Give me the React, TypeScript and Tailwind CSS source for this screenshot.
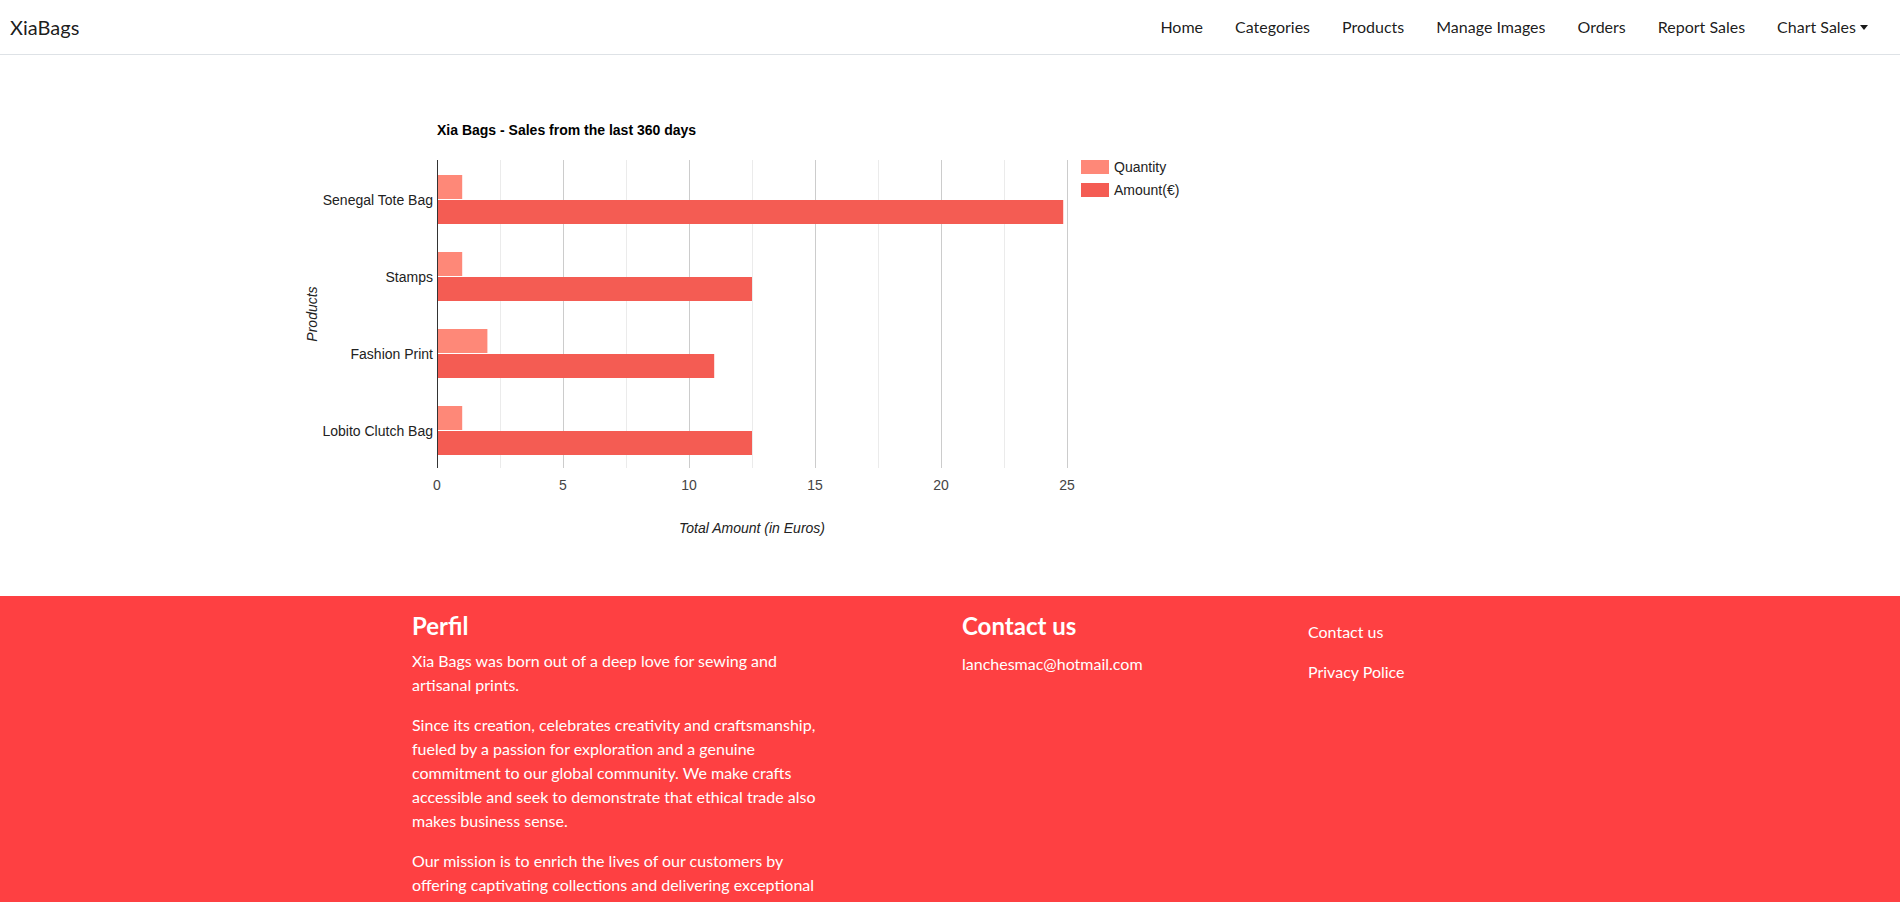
import React from 'react';

const navLinks = ['Home', 'Categories', 'Products', 'Manage Images', 'Orders', 'Report Sales'];

const sales = [
  { name: 'Senegal Tote Bag', quantity: 1, amount: 24.85 },
  { name: 'Stamps', quantity: 1, amount: 12.5 },
  { name: 'Fashion Print', quantity: 2, amount: 11 },
  { name: 'Lobito Clutch Bag', quantity: 1, amount: 12.5 },
];

const UNIT = 25.2;
const LEFT = 147;
const TOP = 85;
const BOTTOM = 393;
const QTY_COLOR = '#fe8878';
const AMT_COLOR = '#f45c53';

function SalesChart() {
  const grid = Array.from({ length: 10 }, (_, i) => i + 1);
  const ticks = [0, 5, 10, 15, 20, 25];

  return (
    <svg width="900" height="500" className="block" style={{ fontFamily: '"Liberation Sans", Arial, sans-serif' }}>
      <text x={LEFT} y={60} fontSize="14" fontWeight="bold" fill="#000">
        Xia Bags - Sales from the last 360 days
      </text>

      {grid.map((i) => (
        <line
          key={i}
          x1={LEFT + 63 * i + 0.5}
          x2={LEFT + 63 * i + 0.5}
          y1={TOP}
          y2={BOTTOM}
          stroke={i % 2 === 0 ? '#cccccc' : '#ebebeb'}
          strokeWidth="1"
        />
      ))}

      {sales.map((s, k) => {
        const top = TOP + 15 + 77 * k;
        return (
          <g key={s.name}>
            <rect x={LEFT} y={top} width={s.quantity * UNIT} height={24} fill={QTY_COLOR} />
            <rect x={LEFT} y={top + 25} width={s.amount * UNIT} height={24} fill={AMT_COLOR} />
            <text x={143} y={top + 29.5} fontSize="14" fill="#222" textAnchor="end">
              {s.name}
            </text>
          </g>
        );
      })}

      <line x1={LEFT + 0.5} x2={LEFT + 0.5} y1={TOP} y2={BOTTOM} stroke="#333" strokeWidth="1" />

      {ticks.map((t) => (
        <text key={t} x={LEFT + t * UNIT} y={415} fontSize="14" fill="#444" textAnchor="middle">
          {t}
        </text>
      ))}

      <text x={462} y={458} fontSize="14" fill="#222" fontStyle="italic" textAnchor="middle">
        Total Amount (in Euros)
      </text>
      <text
        x={22}
        y={239}
        fontSize="14"
        fill="#222"
        fontStyle="italic"
        textAnchor="middle"
        dominantBaseline="central"
        transform="rotate(-90 22 239)"
      >
        Products
      </text>

      <rect x={791} y={85} width={28} height={14} fill={QTY_COLOR} />
      <text x={824} y={97} fontSize="14" fill="#222">Quantity</text>
      <rect x={791} y={108} width={28} height={14} fill={AMT_COLOR} />
      <text x={824} y={120} fontSize="14" fill="#222">Amount(€)</text>
    </svg>
  );
}

export default function App() {
  return (
    <div className="min-h-screen bg-white font-['Segoe_UI','Lato',sans-serif] text-[#212529]">
      <nav className="flex h-[55px] items-center justify-between border-b border-[#dee2e6] pl-[10px] pr-[24px]">
        <a className="text-[20px] leading-[30px] text-black/90">XiaBags</a>
        <ul className="flex items-center">
          {navLinks.map((link) => (
            <li key={link}>
              <a className="block px-[16px] py-2 text-base text-black/90">{link}</a>
            </li>
          ))}
          <li>
            <a className="flex items-center py-2 pr-2 pl-[16px] text-base text-black/90">
              Chart Sales
              <span className="ml-[4px] inline-block border-x-[4.5px] border-t-[5px] border-x-transparent border-t-black/90" />
            </a>
          </li>
        </ul>
      </nav>

      <main className="h-[541px] pt-5">
        <div className="mx-auto w-[1320px]">
          <SalesChart />
        </div>
      </main>

      <footer className="bg-[#fe4042] pt-4 pb-10 text-white">
        <div className="mx-auto grid w-[1320px] grid-cols-12">
          <div className="col-span-4 col-start-2 px-3">
            <h4 className="mb-2 text-2xl leading-[1.2] font-bold">Perfil</h4>
            <p className="mb-4 leading-6">Xia Bags was born out of a deep love for sewing and artisanal prints.</p>
            <p className="mb-4 leading-6">
              Since its creation, celebrates creativity and craftsmanship, fueled by a passion for exploration and a
              genuine commitment to our global community. We make crafts accessible and seek to demonstrate that ethical
              trade also makes business sense.
            </p>
            <p className="mb-4 leading-6">
              Our mission is to enrich the lives of our customers by offering captivating collections and delivering
              exceptional service, with respect for the artisans behind every piece.
            </p>
          </div>
          <div className="col-span-3 col-start-7 px-3">
            <h4 className="mb-2 text-2xl leading-[1.2] font-bold">Contact us</h4>
            <p className="pt-[3px] leading-6">lanchesmac@hotmail.com</p>
          </div>
          <div className="col-span-3 col-start-10 px-3">
            <ul>
              <li>
                <a className="block px-4 py-2 leading-6">Contact us</a>
              </li>
              <li>
                <a className="block px-4 py-2 leading-6">Privacy Police</a>
              </li>
            </ul>
          </div>
        </div>
      </footer>
    </div>
  );
}
